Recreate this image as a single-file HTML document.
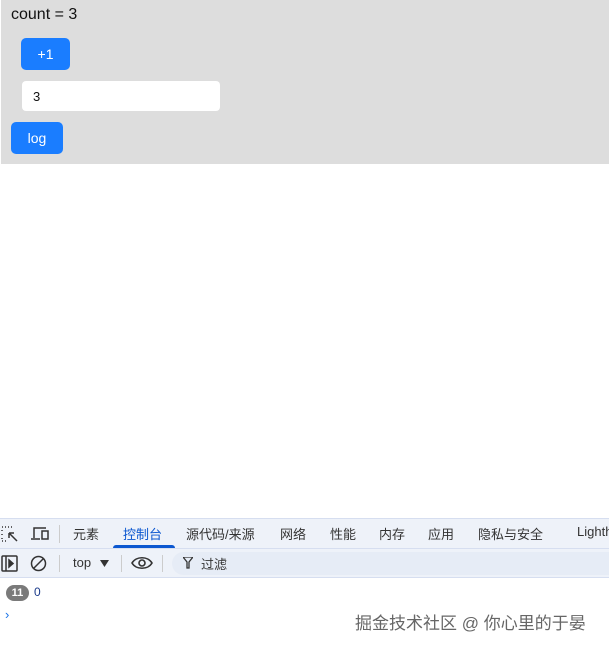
<!DOCTYPE html>
<html><head><meta charset="utf-8"><style>
*{margin:0;padding:0;box-sizing:border-box}
body{width:609px;height:647px;background:#fff;font-family:"Liberation Sans","Noto Sans CJK SC",sans-serif;position:relative;overflow:hidden}
.app{position:absolute;left:1px;top:0;width:608px;height:164px;background:#dddddd}
.abs{position:absolute}
.btn{position:absolute;background:#1a7dff;color:#fff;border-radius:5px;font-size:14px;text-align:center}
.tabs{position:absolute;left:0;top:518px;width:609px;height:31px;background:#eef2f9;border-top:1px solid #d6def0;border-bottom:1px solid #d6def0;font-size:13px;color:#333;overflow:hidden;white-space:nowrap}
.tabs span{position:absolute;top:5px}
.tb{position:absolute;left:0;top:549px;width:609px;height:29px;background:#eef2f9;border-bottom:1px solid #d6def0;font-size:13px;color:#333}
</style></head><body>
<div class="app">
<div class="abs" style="left:10px;top:6px;font-size:16px;color:#111">count = 3</div>
<div class="btn" style="left:20px;top:38px;width:49px;height:32px;line-height:32px">+1</div>
<div class="abs" style="left:21px;top:81px;width:198px;height:30px;background:#fff;border-radius:4px;font-size:13px;padding:8px 11px;color:#111">3</div>
<div class="btn" style="left:10px;top:122px;width:52px;height:32px;line-height:32px">log</div>
</div>
<div class="tabs">
<svg class="abs" style="left:1px;top:6px" width="18" height="18" viewBox="0 0 18 18" fill="none" stroke="#333" stroke-width="1.5"><path d="M1 2h1M4 2h1M7 2h1M10 2h1M1 5v1M1 9v1M1 13v1M1 16h1M4 16h1M8 8l8 8M8 8h5M8 8v5"/></svg>
<svg class="abs" style="left:30px;top:6px" width="20" height="18" viewBox="0 0 20 18" fill="none" stroke="#333" stroke-width="1.5"><path d="M4 13V3h12M1 14h9M12 6h6v8h-6z"/></svg>
<div class="abs" style="left:59px;top:6px;width:1px;height:18px;background:#ccc"></div>
<span style="left:73px">元素</span>
<span style="left:123px;color:#0b57d0">控制台</span>
<div class="abs" style="left:113px;top:26px;width:62px;height:4px;background:#0b57d0;border-radius:3px 3px 0 0"></div>
<span style="left:186px">源代码/来源</span>
<span style="left:280px">网络</span>
<span style="left:330px">性能</span>
<span style="left:379px">内存</span>
<span style="left:428px">应用</span>
<span style="left:478px">隐私与安全</span>
<span style="left:577px">Lighthouse</span>
</div>
<div class="tb">
<svg class="abs" style="left:1px;top:6px" width="17" height="17" viewBox="0 0 17 17" fill="none" stroke="#333" stroke-width="1.5"><rect x="1" y="1" width="15" height="15" rx="1"/><path d="M5 1v15"/><path d="M8 5l4 3.5L8 12z" fill="#333"/></svg>
<svg class="abs" style="left:30px;top:6px" width="17" height="17" viewBox="0 0 17 17" fill="none" stroke="#333" stroke-width="1.5"><circle cx="8.5" cy="8.5" r="7"/><path d="M3.5 13.5l10-10"/></svg>
<div class="abs" style="left:59px;top:6px;width:1px;height:17px;background:#ccc"></div>
<span class="abs" style="left:73px;top:6px">top</span>
<svg class="abs" style="left:100px;top:11px" width="9" height="7"><path d="M0 0h9L4.5 7z" fill="#333"/></svg>
<div class="abs" style="left:121px;top:6px;width:1px;height:17px;background:#ccc"></div>
<svg class="abs" style="left:131px;top:6px" width="22" height="16" viewBox="0 0 22 16" fill="none" stroke="#333" stroke-width="1.6"><path d="M1 8C5 1 17 1 21 8C17 15 5 15 1 8z"/><circle cx="11" cy="8" r="3"/></svg>
<div class="abs" style="left:162px;top:6px;width:1px;height:17px;background:#ccc"></div>
<div class="abs" style="left:172px;top:3px;width:437px;height:23px;background:#e6ecf6;border-radius:12px 0 0 12px"></div>
<svg class="abs" style="left:183px;top:8px" width="10" height="12"><path d="M0 0h10L6 5v6H4V5z" fill="none" stroke="#333" stroke-width="1.3"/></svg>
<span class="abs" style="left:201px;top:5px">过滤</span>
</div>
<div class="abs" style="left:6px;top:585px;width:23px;height:16px;background:#7a7a7a;border-radius:8px;color:#fff;font-size:11px;font-weight:bold;text-align:center;line-height:16px">11</div>
<div class="abs" style="left:34px;top:585px;font-size:12px;color:#1a3a8a">0</div>
<div class="abs" style="left:5px;top:607px;font-size:13px;color:#1a73e8">›</div>
<div class="abs" style="left:355px;top:609px;font-size:17px;color:#666;white-space:nowrap">掘金技术社区 @ 你心里的于晏</div>
</body></html>
